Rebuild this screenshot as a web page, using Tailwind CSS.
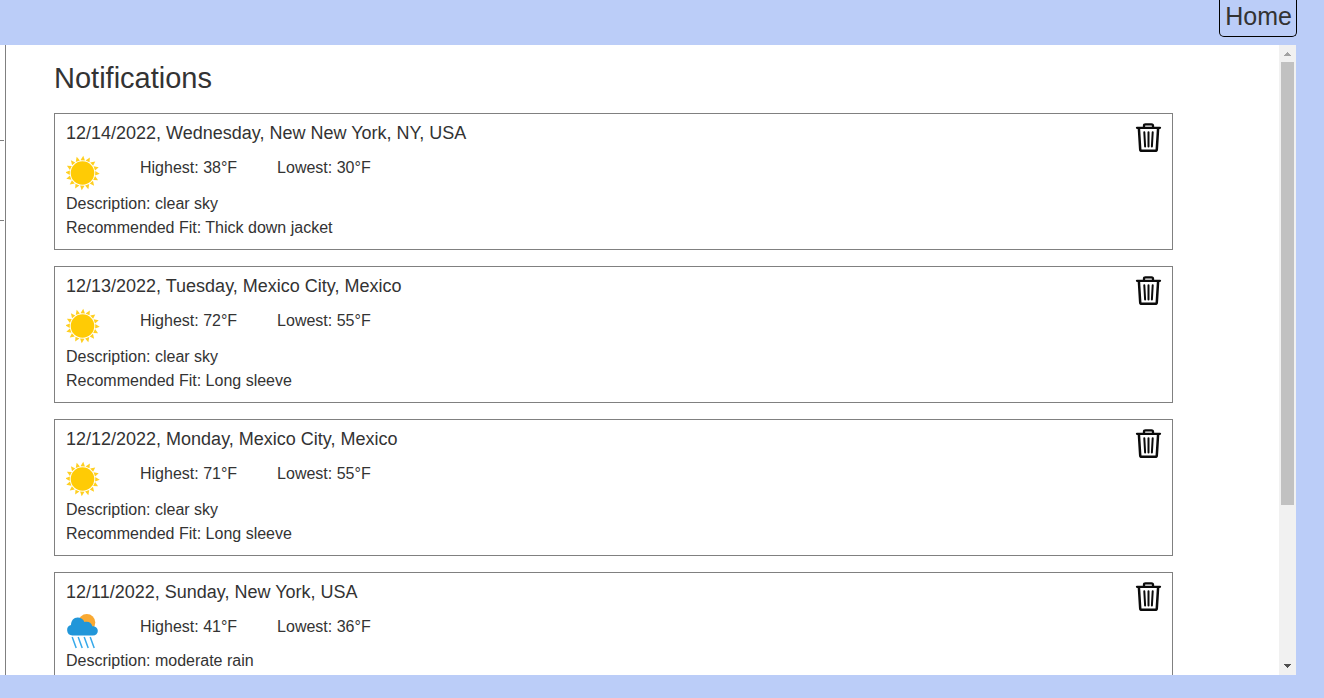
<!DOCTYPE html>
<html lang="en">
<head>
<meta charset="utf-8">
<title>Notifications</title>
<script src="https://cdn.jsdelivr.net/npm/@tailwindcss/browser@4"></script>
</head>
<body class="flex h-screen flex-col overflow-hidden bg-[#bbcdf8] pr-7 pb-[23px] font-['Liberation_Sans',Arial,sans-serif] text-base text-[#333]">
<svg class="hidden" aria-hidden="true">
  <symbol id="sun" viewBox="0 0 34 36">
    <circle cx="16.500" cy="18" r="11.800" fill="#ffcb05"/>
    <g fill="#ffcf20">
      <g id="rays">
        <path id="ray" d="M14.500 5.200 17.300.8l1.600 4.600Z"/>
        <use href="#ray" transform="rotate(22.5 16.5 18)"/>
        <use href="#ray" transform="rotate(45 16.5 18)"/>
        <use href="#ray" transform="rotate(67.5 16.5 18)"/>
      </g>
      <use href="#rays" transform="rotate(90 16.5 18)"/>
      <use href="#rays" transform="rotate(180 16.5 18)"/>
      <use href="#rays" transform="rotate(270 16.5 18)"/>
    </g>
  </symbol>
  <symbol id="rain" viewBox="0 1 34 36">
    <circle cx="20.800" cy="9.500" r="8.500" fill="#f9a932"/>
    <path d="M6.300 22.500a5.300 5.300 0 0 1-1.300-10.400c0-4.600 2.800-7.600 6.600-7.600 3.300 0 5.600 1.700 6.800 4.400 4.400-1 7.300 1 7.900 4.300 3.300 0 5.500 1.900 5.500 4.700 0 2.700-2 4.600-4.900 4.600Z" fill="#2196d9"/>
    <path d="m6.200 24 4 11m2-11 4 11m2-11 4 11m2-11 4 11" fill="none" stroke="#36a9ea" stroke-width="1.500"/>
  </symbol>
  <symbol id="trash" viewBox="0 0 28 32">
    <g fill="none" stroke="#0b0b0b" stroke-linecap="round">
      <path d="M2 5.800h23M9 5.500V3.800Q9 2.300 10.500 2.300h6Q18 2.300 18 3.800V5.500" stroke-width="2.300"/>
      <path d="m3.900 6.500 1.300 20.800q.1 1.500 1.600 1.500h13.400q1.500 0 1.600-1.500l1.300-20.800" stroke-width="2.500"/>
      <path d="m9.300 10.200.8 14.300M13.500 10.200V24.500M17.700 10.200 16.900 24.500" stroke-width="2"/>
    </g>
  </symbol>
</svg>

<header class="flex h-[45px] shrink-0 items-start justify-end">
  <a href="#" class="-mr-px flex h-[37px] items-center rounded-b-[5px] border border-t-0 border-black pr-1 pb-1 pl-[5px] text-[25px] leading-8">Home</a>
</header>

<div class="flex min-h-0 flex-1 bg-white">
  <aside class="flex w-1.5 shrink-0 flex-col border-r border-[#808080] pt-[95px]">
    <div class="mr-px h-[81px] border-y border-[#808080]"></div>
  </aside>

  <main class="min-w-0 flex-1 overflow-hidden pr-[106px] pl-12">
    <h1 class="mt-3 mb-3.5 text-[29px] leading-[42px]">Notifications</h1>
    <ul class="flex flex-col gap-4">
      <li class="flex items-start justify-between border border-[#808080] pt-1.5 pr-[9px] pb-[9px] pl-[11px]">
        <article>
          <h2 class="text-lg leading-[27px]">12/14/2022, Wednesday, New New York, NY, USA</h2>
          <div class="mt-2 flex h-[37px] items-start">
            <svg class="mr-10 h-9 w-[34px]" role="img" aria-label="Sunny"><use href="#sun"/></svg>
            <p class="mt-px mr-10">Highest: 38°F</p><p class="mt-px">Lowest: 30°F</p>
          </div>
          <p>Description: clear sky</p>
          <p>Recommended Fit: Thick down jacket</p>
        </article>
        <button type="button" aria-label="Delete notification" class="mt-0.5"><svg class="h-8 w-7"><use href="#trash"/></svg></button>
      </li>
      <li class="flex items-start justify-between border border-[#808080] pt-1.5 pr-[9px] pb-[9px] pl-[11px]">
        <article>
          <h2 class="text-lg leading-[27px]">12/13/2022, Tuesday, Mexico City, Mexico</h2>
          <div class="mt-2 flex h-[37px] items-start">
            <svg class="mr-10 h-9 w-[34px]" role="img" aria-label="Sunny"><use href="#sun"/></svg>
            <p class="mt-px mr-10">Highest: 72°F</p><p class="mt-px">Lowest: 55°F</p>
          </div>
          <p>Description: clear sky</p>
          <p>Recommended Fit: Long sleeve</p>
        </article>
        <button type="button" aria-label="Delete notification" class="mt-0.5"><svg class="h-8 w-7"><use href="#trash"/></svg></button>
      </li>
      <li class="flex items-start justify-between border border-[#808080] pt-1.5 pr-[9px] pb-[9px] pl-[11px]">
        <article>
          <h2 class="text-lg leading-[27px]">12/12/2022, Monday, Mexico City, Mexico</h2>
          <div class="mt-2 flex h-[37px] items-start">
            <svg class="mr-10 h-9 w-[34px]" role="img" aria-label="Sunny"><use href="#sun"/></svg>
            <p class="mt-px mr-10">Highest: 71°F</p><p class="mt-px">Lowest: 55°F</p>
          </div>
          <p>Description: clear sky</p>
          <p>Recommended Fit: Long sleeve</p>
        </article>
        <button type="button" aria-label="Delete notification" class="mt-0.5"><svg class="h-8 w-7"><use href="#trash"/></svg></button>
      </li>
      <li class="flex items-start justify-between border border-[#808080] pt-1.5 pr-[9px] pb-[9px] pl-[11px]">
        <article>
          <h2 class="text-lg leading-[27px]">12/11/2022, Sunday, New York, USA</h2>
          <div class="mt-2 flex h-[35px] items-start">
            <svg class="mr-10 h-9 w-[34px]" role="img" aria-label="Rain"><use href="#rain"/></svg>
            <p class="mt-px mr-10">Highest: 41°F</p><p class="mt-px">Lowest: 36°F</p>
          </div>
          <p>Description: moderate rain</p>
        </article>
        <button type="button" aria-label="Delete notification" class="mt-0.5"><svg class="h-8 w-7"><use href="#trash"/></svg></button>
      </li>
    </ul>
  </main>

  <div class="flex w-[17px] shrink-0 flex-col items-center bg-[#f1f1f1]" aria-hidden="true">
    <svg class="h-[17px] w-[17px] shrink-0" viewBox="0 0 17 17" shape-rendering="crispEdges"><path d="M5 11h7L8.500 7Z" fill="#a3a3a3"/></svg>
    <div class="grid min-h-0 flex-1 grid-rows-[443fr_153fr] self-stretch px-0.5"><div class="bg-[#c1c1c1]"></div></div>
    <svg class="h-[17px] w-[17px] shrink-0" viewBox="0 0 17 17" shape-rendering="crispEdges"><path d="M5 6h7l-3.500 4Z" fill="#505050"/></svg>
  </div>
</div>
</body>
</html>
